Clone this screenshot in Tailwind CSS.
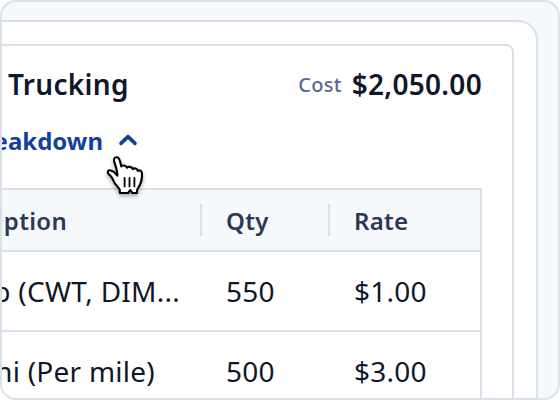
<!DOCTYPE html>
<html lang="en">
<head>
    <meta charset="UTF-8">
    <meta name="viewport" content="width=device-width, initial-scale=1.0">
    <script src="https://cdn.jsdelivr.net/npm/@tailwindcss/browser@4"></script>
    <title>Cost Breakdown</title>
</head>
<body class="bg-white font-['Noto_Sans',sans-serif] text-[#0f1828]">
    <div class="relative w-[560px] h-[400px] overflow-hidden border-2 border-[#dae0e9] rounded-2xl bg-[#f5f9fc]">
        <!-- Panel -->
        <div class="-ml-6 mr-5 mt-[18px] h-[440px] border-2 border-[#dae0e9] rounded-[20px] bg-white pt-[22px] pr-[22px]">
            <!-- Carrier card -->
            <div class="h-[420px] border-2 border-[#dae0e9] rounded-lg pt-[18px] pl-5 pr-[30px]">
                <div class="flex items-center justify-between h-10 pl-1.5 text-[28px] font-semibold tracking-[0.3px] whitespace-nowrap">
                    <h3>Trucking</h3>
                    <div class="flex items-center gap-2.5">
                        <span class="pt-0.5 text-xl font-medium text-[#5c6890]">Cost</span>
                        <span>$2,050.00</span>
                    </div>
                </div>
                <div class="flex items-center h-10 mt-[17px] text-2xl font-bold text-[#143f9e]">
                    <div class="flex justify-end w-[101px] whitespace-nowrap">Cost Breakdown</div>
                    <svg class="ml-[15px] w-5 h-4" viewBox="0 0 20 16" fill="none" stroke="currentColor" stroke-width="3.6" stroke-linecap="round" stroke-linejoin="round">
                        <path d="M3 10.4 10 3.600l7 6.800" />
                    </svg>
                </div>

                <!-- Rates table -->
                <div class="-ml-2 mt-[27px] h-[260px] border-t-2 border-r-2 border-[#dae0e9] whitespace-nowrap">
                    <div class="flex items-center h-[62px] pl-2 border-b-2 border-[#dae0e9] bg-[#f5f9fc] text-2xl font-semibold tracking-[0.3px] text-[#2c3856]">
                        <div class="flex justify-end w-[65px] pt-0.5">Description</div>
                        <div class="flex items-center w-32 h-8 ml-[133px] pl-6 pt-0.5 border-l-2 border-[#dae0e9]">Qty</div>
                        <div class="flex items-center h-8 pl-6 pt-0.5 border-l-2 border-[#dae0e9]">Rate</div>
                    </div>
                    <div class="flex items-center h-20 pl-2 border-b-2 border-[#dae0e9] text-[28px] tracking-[0.25px]">
                        <div class="flex justify-end w-[178px]">lb (CWT, DIM...</div>
                        <div class="w-32 ml-[46px]">550</div>
                        <div>$1.00</div>
                    </div>
                    <div class="flex items-center h-[78px] pl-2 text-[28px] tracking-[0.25px]">
                        <div class="flex justify-end w-[153px]">mi (Per mile)</div>
                        <div class="w-32 ml-[71px]">500</div>
                        <div>$3.00</div>
                    </div>
                </div>
            </div>
        </div>

        <!-- Hand cursor -->
        <svg class="absolute left-[100px] top-[148px] w-12 h-14 drop-shadow-[0_2px_2px_rgb(0_0_0/0.35)]" viewBox="102 150 48 56" fill="white" stroke="black" stroke-width="2.1" stroke-linecap="round" stroke-linejoin="round">
            <path d="M119.800 193v-3.200c-1-2.200-3.200-4-4.800-6.300-1.600-2.400-2.300-5-3.900-7-1.200-1.500-2.800-2.200-3.200-3.600-.5-2 1-3.200 3-2.500 2.700.7 4.600 2.700 6.400 5.200.4-2.400-.6-5.600-1.500-9-1-3.300-2.300-5.800-1.700-7.600.6-2.100 3.600-2.400 4.900-.3 1.200 2 1.500 4.500 2.300 7.800.6-1.600 5-1.400 5.600 1.200.7-1.500 5.200-1.200 5.800 1.400 1.200-1.500 4.800-.5 5 1.900 1-1.300 3.800-.7 4.200 2 .3 4.800-.2 8.500-2.200 12.200-1.200 2.300-2.500 3.600-2.700 5.500v2.300h-4.800l-1.800-3-2.300 3z" />
            <path stroke-width="1.8" d="M124.600 178v8.400M129.500 178v8.400M134.400 178v8.400" />
        </svg>
    </div>
</body>
</html>
